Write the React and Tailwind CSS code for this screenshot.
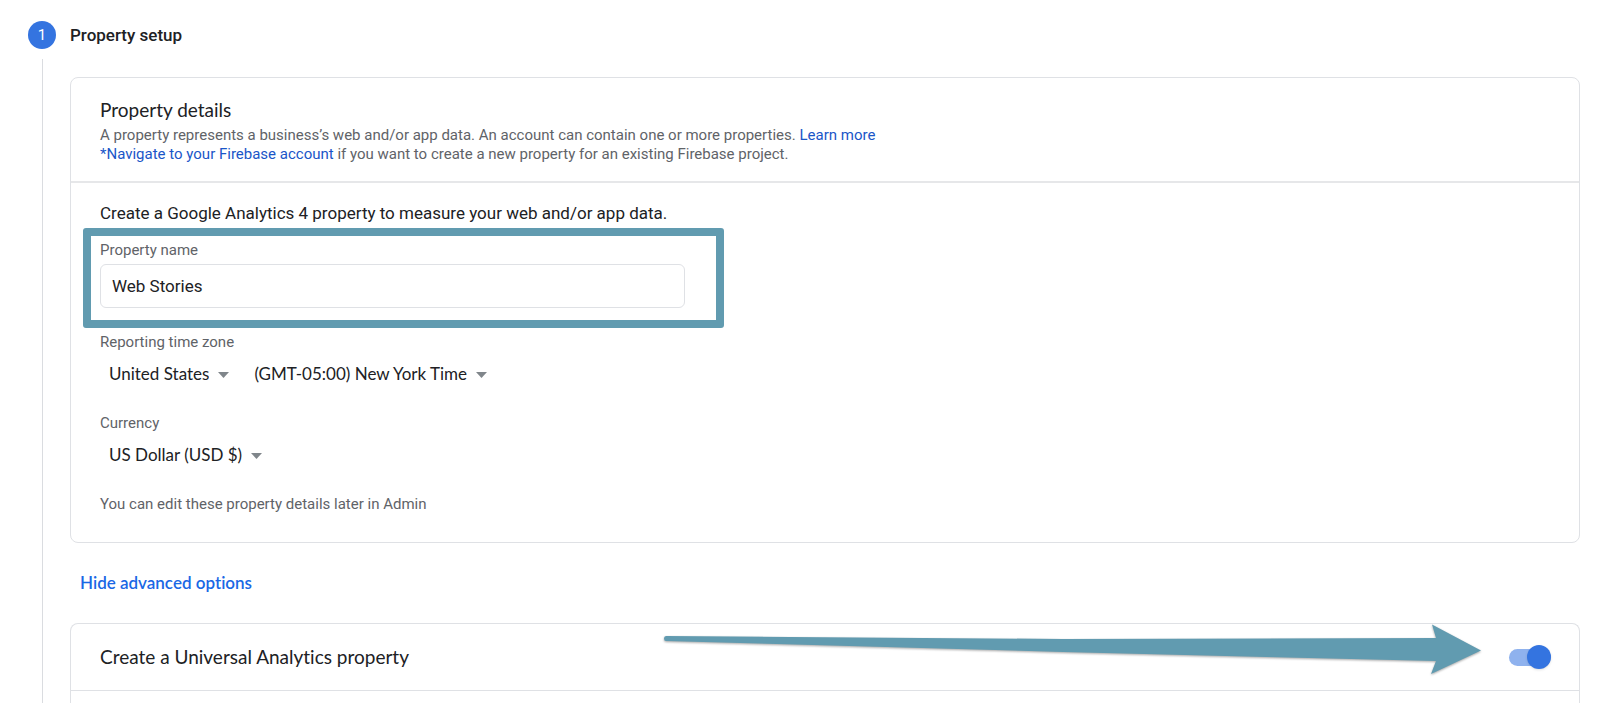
const SelectField = ({ id, label, options }) => {
  return (
    <div className="relative">
      <select
        id={id}
        aria-label={label}
        className="field-sizing-content h-9 appearance-none bg-transparent pl-[9px] pr-7 font-['Lato',sans-serif] text-[17px] leading-6 text-[#202124]"
      >
        {options.map((option) => (
          <option key={option}>{option}</option>
        ))}
      </select>
      <svg
        viewBox="0 0 11 6"
        className="pointer-events-none absolute right-2 top-4 h-[6px] w-[11px]"
        aria-hidden="true"
      >
        <path d="M0 0h11L5.5 6z" fill="#80868b" />
      </svg>
    </div>
  );
};

const ArrowPointer = () => {
  return (
    <svg
      viewBox="0 0 818 54"
      className="pointer-events-none absolute right-[98px] top-0 h-[54px] w-[818px] drop-shadow-[0_1px_1px_rgba(0,0,0,0.35)]"
      aria-hidden="true"
    >
      <path
        d="M3 12 L400 15 L773 14 L769 0.5 L818 26.5 L768 50 L773 37 L400 28 L3 17 Q1 17 1 14.5 Q1 12 3 12z"
        fill="#619bb0"
      />
    </svg>
  );
};

const PropertyDetails = () => {
  return (
    <section className="rounded-lg border border-[#dfe1e5]">
      <div className="border-b-2 border-[#e6e7e9] px-[29px] pb-[17px] pt-5">
        <h2 className="font-['Lato',sans-serif] text-[19px] leading-6 text-[#202124]">
          Property details
        </h2>
        <p className="mt-1 text-[15px] leading-[19px] text-[#5f6368]">
          A property represents a business’s web and/or app data. An account can
          contain one or more properties.{" "}
          <a href="#learn-more" className="text-[#1a56c8]">
            Learn more
          </a>
          <br />
          <a href="#firebase" className="text-[#1a56c8]">
            *Navigate to your Firebase account
          </a>{" "}
          if you want to create a new property for an existing Firebase project.
        </p>
      </div>

      <div className="px-[29px] pb-7 pt-[18px]">
        <p className="text-[17px] leading-6 text-[#202124]">
          Create a Google Analytics 4 property to measure your web and/or app
          data.
        </p>

        <div className="relative mt-[15px] max-w-[585px]">
          <label
            htmlFor="property-name"
            className="block text-[15px] leading-5 text-[#5f6368]"
          >
            Property name
          </label>
          <input
            id="property-name"
            type="text"
            defaultValue="Web Stories"
            className="mt-1 block h-11 w-full rounded-md border border-[#dfe1e5] px-[11px] text-[17px] leading-6 text-[#202124]"
          />
          {/* Callout frame around the field */}
          <div className="pointer-events-none absolute -bottom-5 -left-[17px] -right-[39px] -top-3 rounded-[3px] border-8 border-[#619bb0]" />
        </div>

        <div className="mt-6">
          <p className="text-[15px] leading-5 text-[#5f6368]">
            Reporting time zone
          </p>
          <div className="mt-1 flex gap-2">
            <SelectField
              id="country"
              label="Time zone country"
              options={["United States"]}
            />
            <SelectField
              id="time-zone"
              label="Time zone"
              options={["(GMT-05:00) New York Time"]}
            />
          </div>
        </div>

        <div className="mt-[21px]">
          <label
            htmlFor="currency"
            className="block text-[15px] leading-5 text-[#5f6368]"
          >
            Currency
          </label>
          <div className="mt-1 flex">
            <SelectField
              id="currency"
              label="Currency"
              options={["US Dollar (USD $)"]}
            />
          </div>
        </div>

        <p className="mt-[21px] text-[15px] leading-5 text-[#5f6368]">
          You can edit these property details later in Admin
        </p>
      </div>
    </section>
  );
};

const UniversalAnalytics = () => {
  return (
    <section className="relative flex-1 rounded-t-lg border border-b-0 border-[#dfe1e5]">
      <div className="flex h-[67px] items-center justify-between border-b border-[#dfe1e5] pl-[29px] pr-7">
        <label
          htmlFor="universal-analytics"
          className="font-['Lato',sans-serif] text-[19px] leading-6 text-[#202124]"
        >
          Create a Universal Analytics property
        </label>
        <input
          id="universal-analytics"
          type="checkbox"
          role="switch"
          defaultChecked
          className="flex h-[17px] w-[42px] appearance-none items-center rounded-full bg-[#8fb2ee] before:size-6 before:rounded-full before:bg-[#3474e0] before:shadow before:content-[''] checked:before:ml-auto"
        />
      </div>
      <ArrowPointer />
    </section>
  );
};

const App = () => {
  return (
    <main className="flex min-h-screen gap-[14px] bg-white pl-7 pr-5 pt-[21px] font-['Roboto',sans-serif] [font-variant-ligatures:none]">
      <div className="flex w-7 flex-col items-center">
        <span className="flex size-7 items-center justify-center rounded-full bg-[#3474e0] text-[15px] text-white">
          1
        </span>
        <span className="mt-[10px] w-px flex-1 bg-[#dadce0]" />
      </div>

      <div className="flex flex-1 flex-col">
        <h1 className="text-[17px] font-medium leading-7 text-[#202124]">
          Property setup
        </h1>
        <div className="mt-7 flex flex-1 flex-col">
          <PropertyDetails />
          <button
            type="button"
            className="my-7 self-start px-[10px] font-['Lato',sans-serif] text-[17px] font-semibold leading-6 text-[#1a68e5]"
          >
            Hide advanced options
          </button>
          <UniversalAnalytics />
        </div>
      </div>
    </main>
  );
};

export default App;
